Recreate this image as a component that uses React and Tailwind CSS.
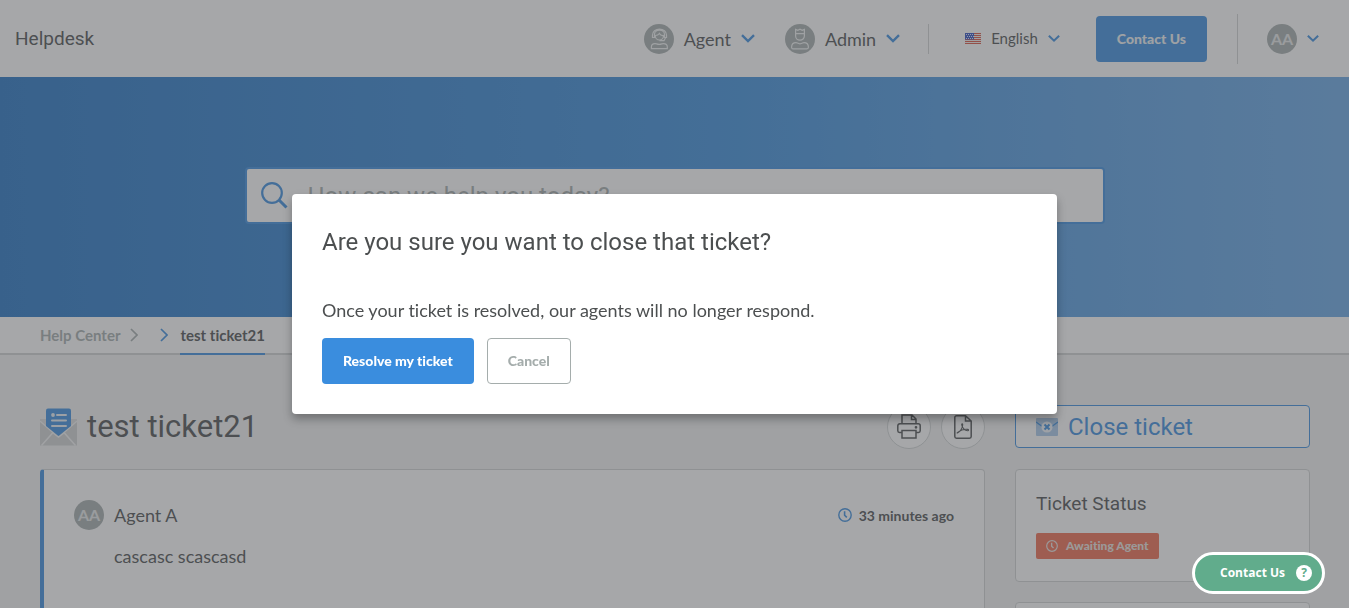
import React from "react";

const Chevron = ({ className = "" }) => (
  <svg className={className} width="14" height="9" viewBox="0 0 14 9" fill="none" stroke="#3a8dde" strokeWidth="2.4">
    <path d="M1 1.200l6 5.800 6-5.800" />
  </svg>
);

const Crumb = ({ color }) => (
  <svg width="8" height="14" viewBox="0 0 8 14" fill="none" stroke={color} strokeWidth="1.7">
    <path d="M1 1l6 6-6 6" />
  </svg>
);

const Clock = ({ size, color }) => (
  <svg width={size} height={size} viewBox="0 0 14 14" fill="none" stroke={color} strokeWidth="1.4">
    <circle cx="7" cy="7" r="6.2" />
    <path d="M6.6 3.2v4l2.2 2.2" strokeWidth="1.6" />
  </svg>
);

const AgentIcon = () => (
  <svg width="30" height="30" viewBox="0 0 30 30" fill="none" stroke="#f0f3f3" strokeWidth="1.2">
    <circle cx="15" cy="15" r="15" fill="#a5adac" stroke="none" />
    <path d="M8.500 13.500v-2.500a7 6 0 0 1 14 0v2.500h-2v-3a5 4.300 0 0 0-10 0v3z" />
    <path d="M11.200 11.500a4.100 4.400 0 1 0 8.400 0c-2 .4-3.400-.6-4.200-2-.8 1.200-2.200 2-4.200 2zM15.500 16.700h4.500l1.500-3" />
    <path d="M7.400 24.600v-1.600c0-2.200 1.500-3.400 3.600-3.400 1.300 0 2 .8 4.200.8s2.900-.8 4.200-.8c2.100 0 3.900 1.200 3.900 3.400v1.600z" />
  </svg>
);

const AdminIcon = () => (
  <svg width="30" height="30" viewBox="0 0 30 30" fill="none" stroke="#f0f3f3" strokeWidth="1.200">
    <circle cx="15" cy="15" r="15" fill="#a5adac" stroke="none" />
    <path d="M10.600 9.600V5.400l2.200 1 2.200-1.200 2.200 1.200 2.200-1v4.200zM10.600 9.600v2.400a4.400 4.200 0 0 0 8.800 0V9.600" />
    <path d="M6.600 23.300c0-3.300 1.600-4.700 4.400-4.700 1.200 0 1.800 1.200 4 1.200s2.800-1.200 4-1.200c2.800 0 4.400 1.400 4.400 4.700 0 .9-.5 1.500-1.400 1.500H8c-.9 0-1.400-.6-1.400-1.500z" />
  </svg>
);

const Flag = () => (
  <svg width="16" height="11" viewBox="0 0 16 11">
    <rect width="16" height="11" fill="#f4f0ee" />
    <path d="M0 .5h16M0 2.500h16M0 4.500h16M0 6.500h16M0 8.500h16M0 10.500h16" stroke="#d8503f" />
    <rect width="9" height="6.500" fill="#2f4fc0" />
    <path d="M1 1.500h8M2 3.500h7M1 5.500h8" stroke="#dfe5ff" strokeDasharray="1 1" />
  </svg>
);

const TicketIcon = () => (
  <svg width="37" height="38" viewBox="0 0 37 38">
    <path d="M0 12h37v25.500H0z" fill="#d0d2d3" />
    <path d="M0 12l18.500 16L37 12v-1H0z" fill="#dcdddd" />
    <path d="M0 13l13 11.500L1.500 37.500M37 13L24 24.500 35.500 37.500M12.500 24.500L18.500 29l6-4.500" fill="none" stroke="#f3f4f4" strokeWidth="1.500" />
    <path d="M6 2.500A2 2 0 0 1 8 .5h21a2 2 0 0 1 2 2V18L18.500 28 6 18z" fill="#3a8dde" />
    <circle cx="13" cy="7" r="1.900" fill="#eaf1f7" />
    <path d="M17 7h9M12 12.500h14M12 18h14" stroke="#eaf1f7" strokeWidth="2" strokeLinecap="round" />
  </svg>
);

const Printer = () => (
  <svg width="24" height="25" viewBox="0 0 24 25" fill="none" stroke="#4c4f50" strokeWidth="1.500">
    <path d="M5 9V1h10l4 4v4M14.500 1v4.500H19M5 18.500H2.500A1.700 1.700 0 0 1 .8 16.800v-5A2 2 0 0 1 2.800 9.800h18.400a2 2 0 0 1 2 2v5a1.700 1.700 0 0 1-1.700 1.700H19M5 16.500h14v7.500H5z" />
    <circle cx="19" cy="13.300" r=".6" fill="#4c4f50" />
  </svg>
);

const Pdf = () => (
  <svg width="18" height="24" viewBox="0 0 18 24" fill="none" stroke="#4c4f50" strokeWidth="1.500">
    <path d="M.8 2.500A1.700 1.700 0 0 1 2.500.8h9L17.200 6v15.500a1.700 1.700 0 0 1-1.700 1.700h-13A1.700 1.700 0 0 1 .8 21.500zM11.500.8V6h5.700" />
    <path strokeWidth="1.100" d="M3.500 18c2-.8 5.500-5 5.200-8.500-.1-1-1.100-.8-1 .2.300 2.800 3.300 6.300 6.300 6 .9-.2.700-1.200-.2-1.300-3-.4-7.300.8-9.800 2.700-.8.600-1.300 1.100-.5.900z" />
  </svg>
);

const CloseMail = () => (
  <svg width="22" height="18" viewBox="0 0 22 18">
    <rect width="22" height="18" rx="1" fill="#a9c9ea" />
    <path d="M0 4l11 8 11-8" fill="none" stroke="#3a8dde" strokeWidth="1.400" />
    <circle cx="11" cy="9" r="5.600" fill="#eef3f8" />
    <path d="M8.500 6.500l5 5M13.500 6.500l-5 5" stroke="#3a8dde" strokeWidth="2" />
  </svg>
);

const Avatar = () => (
  <span className="flex size-[30px] shrink-0 items-center justify-center rounded-full bg-[#a5adac] text-base font-bold text-[#e6e8e8]">
    AA
  </span>
);

function Header() {
  return (
    <header className="flex h-[77px] items-center justify-between bg-white pr-[30px] pl-[15px]">
      <a href="#home" className="pt-0.5 font-['Roboto',sans-serif] text-[19px]">Helpdesk</a>
      <nav className="flex items-center">
        <button className="flex items-center gap-2.5 text-lg">
          <AgentIcon />
          <span>Agent</span>
          <Chevron />
        </button>
        <button className="ml-[30px] flex items-center gap-2.5 text-lg">
          <AdminIcon />
          <span>Admin</span>
          <Chevron />
        </button>
        <span className="ml-7 h-[30px] w-px bg-[#d0d3d3]" />
        <button className="ml-9 flex items-center gap-2.5 text-[15px]">
          <Flag />
          <span>English</span>
          <Chevron className="w-3" />
        </button>
        <a href="#contact" className="ml-9 flex h-[46px] items-center rounded bg-[#3a8dde] px-[21px] text-sm font-black text-[#eef2f5]">
          Contact Us
        </a>
        <span className="ml-[30px] h-[50px] w-px bg-[#d0d3d3]" />
        <button className="ml-[29px] flex items-center gap-2.5" aria-label="Account">
          <Avatar />
          <Chevron className="w-3" />
        </button>
      </nav>
    </header>
  );
}

function Thread() {
  return (
    <section className="min-w-0 flex-1">
      <div className="flex h-[43px] items-center">
        <TicketIcon />
        <h1 className="ml-2.5 flex-1 pt-0.5 font-['Roboto',sans-serif] text-[31px]">test ticket21</h1>
        <button aria-label="Print" className="flex size-11 items-center justify-center rounded-full border border-[#d0d3d3] bg-white">
          <Printer />
        </button>
        <button aria-label="Download PDF" className="ml-2.5 flex size-11 items-center justify-center rounded-full border border-[#d0d3d3] bg-white">
          <Pdf />
        </button>
      </div>
      <article className="mt-[21px] min-h-60 rounded border border-l-4 border-[#d0d3d3] border-l-[#3a8dde] bg-white px-[30px] pt-[30px]">
        <div className="flex items-center text-lg">
          <Avatar />
          <span className="ml-2.5 flex-1">Agent A</span>
          <Clock size={14} color="#3a8dde" />
          <time className="ml-[7px] pt-0.5 text-sm font-bold">33 minutes ago</time>
        </div>
        <p className="mt-3 pl-10 text-lg">cascasc scascasd</p>
      </article>
    </section>
  );
}

function Sidebar() {
  return (
    <aside className="w-[295px] shrink-0">
      <button className="flex h-[43px] w-full items-center gap-2.5 rounded border border-[#3a8dde] bg-white px-5 font-['Roboto',sans-serif] text-2xl text-[#3a8dde]">
        <CloseMail />
        Close ticket
      </button>
      <div className="mt-[21px] h-[113px] rounded border border-[#d0d3d3] bg-white px-5 pt-5">
        <h2 className="font-['Roboto',sans-serif] text-[19px] leading-7">Ticket Status</h2>
        <span className="mt-[15px] inline-flex h-[26px] items-center gap-2 rounded-xs bg-[#ee6a4e] px-2.5 text-xs font-black text-[#e9e2df]">
          <Clock size={12} color="#e9e2df" />
          Awaiting Agent
        </span>
      </div>
      <div className="mt-5 h-24 rounded border border-[#d0d3d3] bg-white" />
    </aside>
  );
}

function Dialog() {
  return (
    <div className="fixed inset-0 flex items-center justify-center bg-[#4d4f53]/50">
      <div role="dialog" aria-modal="true" aria-labelledby="dialog-title" className="w-[765px] max-w-full rounded bg-white p-[30px] shadow-[0_5px_10px_rgba(0,0,0,0.3)]">
        <h2 id="dialog-title" className="font-['Roboto',sans-serif] text-2xl leading-9">
          Are you sure you want to close that ticket?
        </h2>
        <p className="mt-9 text-lg leading-7">Once your ticket is resolved, our agents will no longer respond.</p>
        <div className="mt-3.5 flex gap-[13px] text-sm font-black">
          <button className="h-[46px] rounded bg-[#3a8dde] px-[21px] text-white">Resolve my ticket</button>
          <button className="h-[46px] rounded border border-[#a5adac] px-5 text-[#a5adac]">Cancel</button>
        </div>
      </div>
    </div>
  );
}

export default function App() {
  return (
    <div className="h-screen overflow-hidden bg-[#f2f3f3] font-['Lato',sans-serif] text-[#4c4f50] [font-variant-ligatures:no-common-ligatures]">
      <Header />
      <div className="flex h-60 items-start justify-center bg-linear-to-r from-[#2373c3] via-[#3b8edb] via-55% to-[#67a7e5] px-10 pt-[90px]">
        <label className="flex h-[57px] w-full max-w-[860px] items-center rounded border-2 border-[#3a8dde] bg-white px-3.5">
          <svg width="27" height="27" viewBox="0 0 27 27" fill="none" stroke="#3a8dde" strokeWidth="2.200">
            <circle cx="11" cy="11" r="9.800" />
            <path d="M18 18l7.500 7.500" strokeWidth="3" />
          </svg>
          <input
            type="text"
            aria-label="Search"
            placeholder="How can we help you today?"
            className="ml-5 min-w-0 flex-1 font-['Roboto',sans-serif] text-2xl outline-none placeholder:text-[#a5adac]"
          />
        </label>
      </div>
      <nav aria-label="Breadcrumb" className="flex h-[38px] border-b-2 border-[#d0d3d3] bg-white px-10 text-[15px] font-bold">
        <a href="#help" className="flex items-center gap-2.5 text-[#a5adac]">
          Help Center
          <Crumb color="#a5adac" />
        </a>
        <span className="ml-[22px] flex items-center gap-3">
          <Crumb color="#3a8dde" />
          <a href="#ticket" className="-mb-0.5 flex h-[38px] items-center self-start border-b-2 border-[#3a8dde]">test ticket21</a>
        </span>
      </nav>
      <main className="flex gap-[30px] pt-[50px] pr-[39px] pl-10">
        <Thread />
        <Sidebar />
      </main>
      <Dialog />
      <button className="fixed right-6 bottom-3.5 flex h-[42px] w-[133px] items-center justify-end gap-[11px] rounded-full border-3 border-white bg-[#61ac8c] pr-2.5 font-['Open_Sans',sans-serif] text-xs font-bold text-white">
        Contact Us
        <span className="flex size-4 items-center justify-center rounded-full bg-white text-[#61ac8c]">?</span>
      </button>
    </div>
  );
}
